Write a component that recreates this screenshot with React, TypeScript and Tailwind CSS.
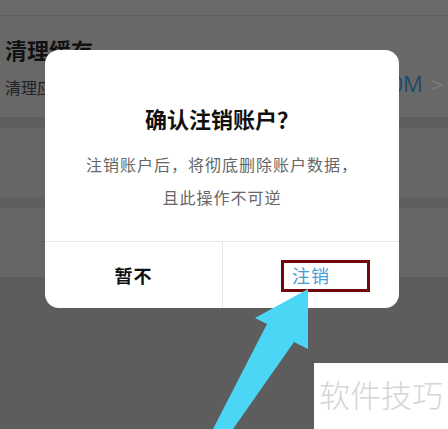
import React from "react";

const cjk = { fontFamily: '"Noto Sans CJK SC", "Noto Sans", sans-serif' };

export default function App() {
  return (
    <div className="relative w-[448px] h-[429px] overflow-hidden bg-[#5d5d5d]" style={cjk}>
      {/* background page (dimmed) */}
      <div className="flex flex-col">
        <div className="h-[16px] bg-[#6a6a6a] border-b border-[#606060]" />
        <div className="h-[101px] bg-[#686868] flex items-start justify-between pl-[5px] pr-[5px]">
          <div className="flex flex-col">
            <div className="mt-[20px] text-[22px] leading-[26px] font-bold text-[#111]">清理缓存</div>
            <div className="mt-[15px] text-[16px] leading-[20px] text-[#222]">清理应用缓存数据</div>
          </div>
          <div className="mt-[54px] flex items-center gap-[8px]">
            <span className="text-[22px] leading-[26px] text-[#1d4a6b]" style={{ fontFamily: '"Open Sans", sans-serif' }}>0M</span>
            <span className="text-[22px] leading-[26px] text-[#7a7a7a]">&gt;</span>
          </div>
        </div>
        <div className="h-[11px] bg-[#5f5f5f]" />
        <div className="h-[69px] bg-[#666666]" />
        <div className="h-[11px] bg-[#5f5f5f]" />
        <div className="h-[69px] bg-[#666666]" />
      </div>

      {/* dialog */}
      <div className="absolute left-[45px] top-[50px] w-[354px] h-[258px] rounded-[14px] bg-white flex flex-col overflow-hidden">
        <div className="h-[191px] flex flex-col items-center">
          <div className="mt-[54px] text-[22px] leading-[28px] font-bold text-[#111]">确认注销账户？</div>
          <div className="mt-[16px] text-[16px] leading-[33px] text-[#666666] tracking-[1px] text-center">
            注销账户后，将彻底删除账户数据，
            <br />
            且此操作不可逆
          </div>
        </div>
        <div className="flex flex-1 border-t border-[#e6e6e6]">
          <div className="w-[178px] flex items-center justify-center border-r border-[#e6e6e6]">
            <span className="text-[18px] font-bold text-[#111] tracking-[1px]">暂不</span>
          </div>
          <div className="flex-1 flex items-center justify-center">
            <span className="text-[18px] text-[#4a9bd3] tracking-[1px]">注销</span>
          </div>
        </div>
      </div>

      {/* annotation box */}
      <div className="absolute left-[281px] top-[260px] w-[89px] h-[32px] border-[3px] border-[#6e0a0a]" />

      {/* arrow */}
      <svg className="absolute left-0 top-0" width="448" height="429" viewBox="0 0 448 429">
        <polygon
          points="308,289 308,349 294,342 233,429 213,429 267,324 255,318"
          fill="#4cd6f5"
        />
      </svg>

      {/* watermark */}
      <div className="absolute left-[314px] top-[363px] w-[134px] h-[66px] bg-white flex items-start">
        <span className="ml-[5px] mt-[12px] text-[31px] leading-[38px] font-light text-[#d5d5d5] whitespace-nowrap">软件技巧</span>
      </div>
    </div>
  );
}
